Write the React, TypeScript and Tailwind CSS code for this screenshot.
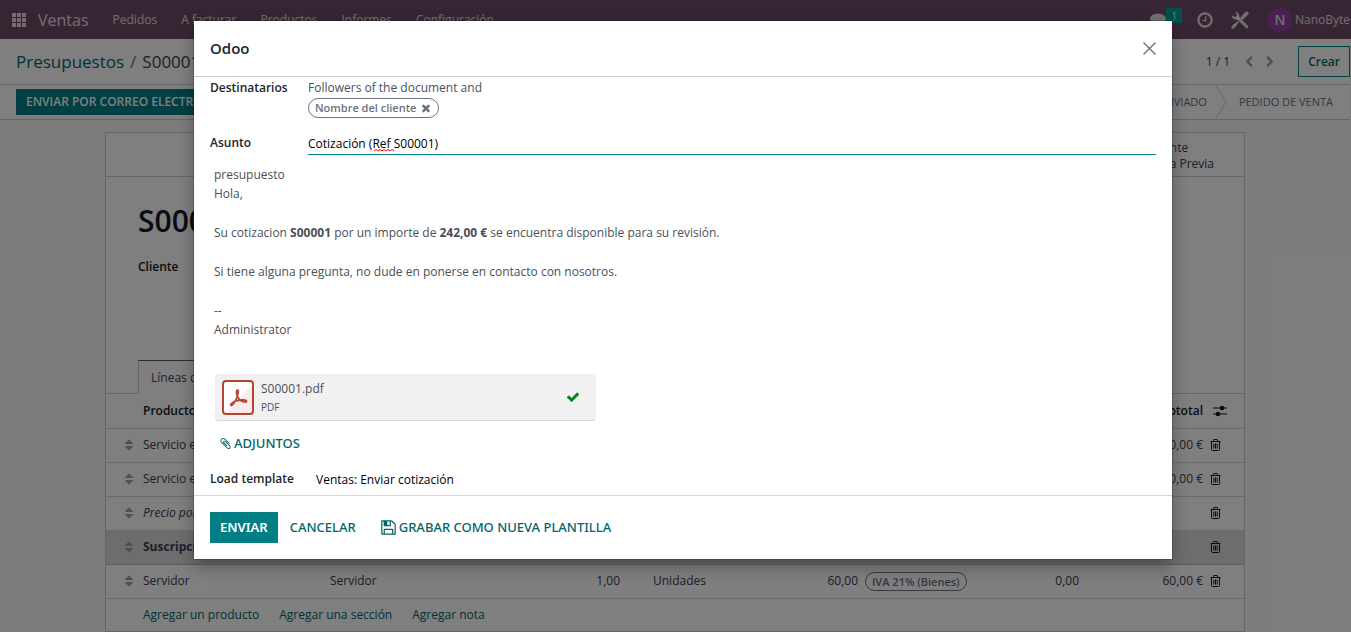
import React, { useState } from 'react';

type IconProps = {
  className?: string;
};

type FaProps = IconProps & {
  d: string;
};

type LineType = 'product' | 'note' | 'section';

type Line = {
  key: number;
  type: LineType;
  product: string;
  description?: string;
  quantity?: string;
  unit?: string;
  price?: string;
  tax?: string;
  discount?: string;
  subtotal?: string;
};

const lines: Line[] = [
  { key: 1, type: 'product', product: 'Servicio estándar', subtotal: '60,00 €' },
  { key: 2, type: 'product', product: 'Servicio extra', subtotal: '80,00 €' },
  { key: 3, type: 'note', product: 'Precio por servicio' },
  { key: 4, type: 'section', product: 'Suscripciones' },
  {
    key: 5,
    type: 'product',
    product: 'Servidor',
    description: 'Servidor',
    quantity: '1,00',
    unit: 'Unidades',
    price: '60,00',
    tax: 'IVA 21% (Bienes)',
    discount: '0,00',
    subtotal: '60,00 €',
  },
];

const menus = ['Pedidos', 'A facturar', 'Productos', 'Informes', 'Configuración'];

const paths = {
  check:
    'M1671 566q0 40-28 68l-724 724-136 136q-28 28-68 28t-68-28l-136-136-362-362q-28-28-28-68t28-68l136-136q28-28 68-28t68 28l294 295 656-657q28-28 68-28t68 28l136 136q28 28 28 68z',
  times:
    'M1490 1322q0 40-28 68l-136 136q-28 28-68 28t-68-28l-294-294-294 294q-28 28-68 28t-68-28l-136-136q-28-28-28-68t28-68l294-294-294-294q-28-28-28-68t28-68l136-136q28-28 68-28t68 28l294 294 294-294q28-28 68-28t68 28l136 136q28 28 28 68t-28 68l-294 294 294 294q28 28 28 68z',
  sort: 'M1408 1088q0 26-19 45l-448 448q-19 19-45 19t-45-19l-448-448q-19-19-19-45t19-45 45-19h896q26 0 45 19t19 45zm0-384q0 26-19 45t-45 19h-896q-26 0-45-19t-19-45 19-45l448-448q19-19 45-19t45 19l448 448q19 19 19 45z',
  clock:
    'M1024 544v448q0 14-9 23t-23 9h-320q-14 0-23-9t-9-23v-64q0-14 9-23t23-9h224v-352q0-14 9-23t23-9h64q14 0 23 9t9 23zm416 352q0-148-73-273t-198-198-273-73-273 73-198 198-73 273 73 273 198 198 273 73 273-73 198-198 73-273zm224 0q0 209-103 385.5t-279.5 279.5-385.5 103-385.5-103-279.5-279.5-103-385.5 103-385.5 279.5-279.5 385.5-103 385.5 103 279.5 279.5 103 385.5z',
  left: 'M1427 301l-531 531 531 531q19 19 19 45t-19 45l-166 166q-19 19-45 19t-45-19l-742-742q-19-19-19-45t19-45l742-742q19-19 45-19t45 19l166 166q19 19 19 45t-19 45z',
  right:
    'M1363 877l-742 742q-19 19-45 19t-45-19l-166-166q-19-19-19-45t19-45l531-531-531-531q-19-19-19-45t19-45l166-166q19-19 45-19t45 19l742 742q19 19 19 45t-19 45z',
  floppy:
    'M512 1536h768v-384h-768v384zm896 0h128v-896q0-14-10-38.5t-20-34.5l-281-281q-10-10-34-20t-39-10v416q0 40-28 68t-68 28h-576q-40 0-68-28t-28-68v-416h-128v1280h128v-416q0-40 28-68t68-28h832q40 0 68 28t28 68v416zm-384-928v-320q0-13-9.5-22.5t-22.5-9.5h-192q-13 0-22.5 9.5t-9.5 22.5v320q0 13 9.5 22.5t22.5 9.5h192q13 0 22.5-9.5t9.5-22.5zm640 32v928q0 40-28 68t-68 28h-1344q-40 0-68-28t-28-68v-1344q0-40 28-68t68-28h928q40 0 88 20t76 48l280 280q28 28 48 76t20 88z',
  paperclip:
    'M1596 1385q0 117-79 196t-196 79q-135 0-235-100l-777-776q-113-115-113-271 0-159 110-270t269-111q158 0 273 113l605 606q10 10 10 22 0 16-30.5 46.5t-46.5 30.5q-13 0-23-10l-606-607q-79-77-181-77-106 0-179 75t-73 181q0 105 76 181l776 777q63 63 145 63 64 0 106-42t42-106q0-82-63-145l-581-581q-26-24-60-24-29 0-48 19t-19 48q0 32 25 59l410 410q10 10 10 22 0 16-31 47t-47 31q-12 0-22-10l-410-410q-63-61-63-149 0-82 57-139t139-57q88 0 149 63l581 581q100 98 100 235z',
};

const Fa: React.FC<FaProps> = ({ d, className }) => (
  <svg viewBox="0 0 1792 1792" fill="currentColor" className={className}>
    <path d={d} />
  </svg>
);

const AppsIcon: React.FC<IconProps> = ({ className }) => (
  <svg viewBox="0 0 14 14" fill="currentColor" className={className}>
    {[0, 5, 10].map((y) =>
      [0, 5, 10].map((x) => (
        <rect key={`${x}-${y}`} x={x} y={y} width="4" height="4" />
      ))
    )}
  </svg>
);

const ToolsIcon: React.FC<IconProps> = ({ className }) => (
  <svg viewBox="0 0 18 18" fill="none" stroke="currentColor" className={className}>
    <path d="M7 7l8.8 8.8" strokeWidth="3" strokeLinecap="round" />
    <path
      d="M4.6 0.9C6.8 1 8.4 2.8 8 5.2L8.6 7.6 7 9 5 8.1C2.6 8.4 0.8 6.8 0.8 4.6L3.1 6.1 5.4 5.6 6 3.2z"
      fill="currentColor"
      strokeWidth="0.4"
    />
    <path d="M11.4 6.7l4.4-4.4" strokeWidth="3.6" strokeLinecap="round" />
    <path d="M7.4 10.6l-4.2 4.2" strokeWidth="2" />
    <path d="M4 14l-2.2 2.4" strokeWidth="3" strokeLinecap="round" />
  </svg>
);

const TrashIcon: React.FC<IconProps> = ({ className }) => (
  <svg viewBox="0 0 11 12" fill="none" stroke="currentColor" className={className}>
    <path d="M0.5 2.5h10M3.5 2.5v-1.4q0-.6.6-.6h2.8q.6 0 .6.6v1.4" />
    <path d="M1.5 2.5v8q0 1 1 1h6q1 0 1-1v-8M3.8 4.5v5M5.5 4.5v5M7.2 4.5v5" />
  </svg>
);

const SlidersIcon: React.FC<IconProps> = ({ className }) => (
  <svg viewBox="0 0 14 12" fill="currentColor" className={className}>
    <path d="M0 2.5h14v1H0zM0 8.5h14v1H0z" />
    <circle cx="9" cy="3" r="2.3" />
    <circle cx="5" cy="9" r="2.3" />
  </svg>
);

const PdfIcon: React.FC<IconProps> = ({ className }) => (
  <svg viewBox="0 0 32 35" className={className}>
    <rect x="1" y="1" width="30" height="33" rx="3" fill="#fff" />
    <path d="M31 4v27q0 3-3 3H4z" fill="#f6eaea" />
    <rect
      x="1"
      y="1"
      width="30"
      height="33"
      rx="3"
      fill="none"
      stroke="#b54434"
      strokeWidth="2"
    />
    <path
      d="M15.6 10.2c-1.5 0-1.3 2.4-.7 4.2.9 2.9 3.4 6.2 6.3 7.3 1.8.7 3.3.5 3.4-.4.1-1.2-2.5-1.6-5-1.4-3.5.2-7.7 1.6-9.7 3.2-1.4 1.1-1.6 2.2-.8 2.4 1.5.4 4.2-4.2 5.7-7.8 1.2-3 2.3-7.5.8-7.5z"
      fill="none"
      stroke="#b54434"
      strokeWidth="1.7"
    />
  </svg>
);

const Navbar: React.FC = () => {
  return (
    <header className="flex h-[39px] shrink-0 items-center bg-[#714b67] text-white/80">
      <button aria-label="Aplicaciones" className="ml-3">
        <AppsIcon className="size-3.5" />
      </button>
      <a href="#ventas" className="ml-3 text-[16px]">
        Ventas
      </a>
      <nav className="ml-6 flex gap-6">
        {menus.map((menu) => (
          <a key={menu} href="#menu">
            {menu}
          </a>
        ))}
      </nav>
      <div className="ml-auto flex items-center">
        <button className="relative mr-[30px] flex" aria-label="Conversaciones">
          <svg viewBox="0 0 16 14" fill="currentColor" className="h-3.5 w-4">
            <ellipse cx="8" cy="6" rx="8" ry="5.5" />
            <path d="M3 9q0 3-2 4.5 3.5 0 6-2.5z" />
          </svg>
          <span className="absolute -top-[5px] left-4 bg-[#00a09d] px-[5px] text-[11px] leading-[15px]">
            1
          </span>
        </button>
        <button aria-label="Actividades" className="mr-[17px]">
          <Fa d={paths.clock} className="size-[18px]" />
        </button>
        <button aria-label="Herramientas" className="mr-[19px]">
          <ToolsIcon className="size-[18px]" />
        </button>
        <button className="flex w-[83px] items-center gap-[3px]">
          <span className="flex size-6 shrink-0 items-center justify-center rounded-full bg-[#9040a4] text-[14px] font-semibold">
            N
          </span>
          NanoByte
        </button>
      </div>
    </header>
  );
};

const ControlPanel: React.FC = () => {
  return (
    <div className="flex h-[46px] shrink-0 items-center border-b border-[#c9ccd2] bg-white pl-4">
      <ol className="flex gap-1.5 text-[17px]">
        <li>
          <a href="#presupuestos" className="text-[#01666b]">
            Presupuestos
          </a>
        </li>
        <li className="text-gray-500">/</li>
        <li>S00001</li>
      </ol>
      <div className="ml-auto flex items-center">
        <span className="mr-[13px]">1 / 1</span>
        <button aria-label="Anterior" className="mr-[9px] text-gray-400">
          <Fa d={paths.left} className="size-3" />
        </button>
        <button aria-label="Siguiente" className="mr-[22px] text-gray-400">
          <Fa d={paths.right} className="size-3" />
        </button>
        <button className="h-[31px] border border-[#017e84] px-[9px] font-semibold text-[#01666b]">
          Crear
        </button>
      </div>
    </div>
  );
};

const StatusBar: React.FC = () => {
  return (
    <div className="flex h-[35px] shrink-0 items-center border-b border-[#c9ccd2] bg-white pl-4">
      <button className="h-[26px] bg-[#017e84] px-2.5 font-semibold text-white">
        ENVIAR POR CORREO ELECTRÓNICO
      </button>
      <div className="ml-auto flex h-full items-center text-[11px] text-gray-500">
        <span>PRESUPUESTO ENVIADO</span>
        <svg
          viewBox="0 0 12 34"
          fill="none"
          stroke="#c9ccd2"
          className="mr-3 ml-2 h-full w-3"
        >
          <path d="M1 1l10 16-10 16" />
        </svg>
        <span className="pr-[17px]">PEDIDO DE VENTA</span>
      </div>
    </div>
  );
};

const OrderLine: React.FC<{ line: Line }> = ({ line }) => {
  const remove = (
    <td className="pl-0.5">
      <button aria-label="Eliminar" className="flex text-gray-900">
        <TrashIcon className="h-3 w-[11px]" />
      </button>
    </td>
  );
  const handle = (
    <td>
      <Fa d={paths.sort} className="ml-4 size-3.5 text-gray-400" />
    </td>
  );

  if (line.type !== 'product') {
    return (
      <tr
        className={
          line.type === 'section'
            ? 'h-[34px] border-b border-[#b8bbc0] bg-[#dadada] font-bold'
            : 'h-[34px] border-b border-[#d4d6d9] italic'
        }
      >
        {handle}
        <td colSpan={8} className="px-[5px]">
          {line.product}
        </td>
        {remove}
      </tr>
    );
  }

  return (
    <tr className="h-[34px] border-b border-[#d4d6d9]">
      {handle}
      <td className="px-[5px]">{line.product}</td>
      <td className="px-[5px]">{line.description}</td>
      <td className="pr-7 text-right">{line.quantity}</td>
      <td className="px-[5px]">{line.unit}</td>
      <td className="px-[5px] text-right">{line.price}</td>
      <td className="px-0.5">
        {line.tax && (
          <span className="inline-block rounded-full border border-gray-500 px-1.5 text-[11px] leading-[17px] font-semibold text-gray-500">
            {line.tax}
          </span>
        )}
      </td>
      <td className="px-[5px] text-right">{line.discount}</td>
      <td className="px-[5px] text-right">{line.subtotal}</td>
      {remove}
    </tr>
  );
};

const OrderSheet: React.FC = () => {
  return (
    <main className="mx-auto mt-3 w-full max-w-[1140px] border border-[#c9ccd2] bg-white">
      <div className="flex h-11 items-center justify-end border-b border-[#c9ccd2] pt-0.5 pr-[30px]">
        <a href="#previa" className="leading-4">
          Cliente
          <br />
          Vista Previa
        </a>
      </div>
      <div className="px-8 pt-6 pb-[83px] text-gray-900">
        <h1 className="text-[30px] leading-10 font-semibold">S00001</h1>
        <p className="mt-4 leading-5 font-semibold">Cliente</p>
      </div>
      <div className="flex h-[34px]">
        <span className="w-8 border-b border-[#c9ccd2]" />
        <button className="border-x border-t border-x-[#c9ccd2] border-t-[#714b67] px-3">
          Líneas del pedido
        </button>
        <span className="flex-1 border-b border-[#c9ccd2]" />
      </div>
      <table className="w-full table-fixed border-collapse whitespace-nowrap">
        <colgroup>
          <col className="w-8" />
          <col className="w-[187px]" />
          <col />
          <col className="w-[118px]" />
          <col className="w-[105px]" />
          <col className="w-[110px]" />
          <col className="w-[112px]" />
          <col className="w-[109px]" />
          <col className="w-[124px]" />
          <col className="w-9" />
        </colgroup>
        <thead>
          <tr className="h-[34px] border-b border-[#d4d6d9] text-left text-gray-900">
            <th />
            <th className="px-[5px] font-semibold">Producto</th>
            <th className="px-[5px] font-semibold">Descripción</th>
            <th className="pr-7 text-right font-semibold">Cantidad</th>
            <th className="px-[5px] font-semibold">UdM</th>
            <th className="px-[5px] text-right font-semibold">Precio</th>
            <th className="px-0.5 font-semibold">Impuestos</th>
            <th className="px-[5px] text-right font-semibold">% Desc.</th>
            <th className="px-[5px] text-right font-semibold">Subtotal</th>
            <th className="pl-[5px]">
              <SlidersIcon className="h-3 w-3.5" />
            </th>
          </tr>
        </thead>
        <tbody>
          {lines.map((line) => (
            <OrderLine key={line.key} line={line} />
          ))}
        </tbody>
      </table>
      <div className="flex h-8 items-center gap-5 pl-[37px] text-[#01666b]">
        <button>Agregar un producto</button>
        <button>Agregar una sección</button>
        <button>Agregar nota</button>
      </div>
    </main>
  );
};

const MailDialog: React.FC = () => {
  const [subject, setSubject] = useState('Cotización (Ref S00001)');
  const [template, setTemplate] = useState('Ventas: Enviar cotización');

  return (
    <div className="absolute inset-0 flex items-start justify-center bg-black/50 pt-[21px] pl-[15px]">
      <section
        role="dialog"
        aria-label="Odoo"
        className="w-full max-w-[978px] bg-white text-[#495057] shadow-[0_0_1px_#000,0_8px_16px_rgba(0,0,0,0.3)]"
      >
        <header className="flex h-14 items-center justify-between border-b border-[#c9ccd2] px-4">
          <h2 className="text-[15px] font-semibold text-[#212529]">Odoo</h2>
          <button aria-label="Cerrar" className="text-gray-500">
            <svg
              viewBox="0 0 13 13"
              fill="none"
              stroke="currentColor"
              strokeWidth="1.4"
              className="size-[13px]"
            >
              <path d="M0.5 0.5l12 12M12.5 0.5l-12 12" />
            </svg>
          </button>
        </header>

        <div className="px-4">
          <div className="flex">
            <span className="w-[98px] leading-[21px] font-semibold text-[#212529]">
              Destinatarios
            </span>
            <div>
              <p className="leading-[21px]">Followers of the document and</p>
              <span className="inline-flex h-5 items-center gap-1 rounded-full border border-gray-500 px-1.5 text-[11px] font-semibold text-gray-500">
                Nombre del cliente
                <button aria-label="Quitar">
                  <Fa d={paths.times} className="size-3" />
                </button>
              </span>
            </div>
          </div>

          <div className="mt-3 flex items-center">
            <label
              htmlFor="subject"
              className="w-[98px] font-semibold text-[#212529]"
            >
              Asunto
            </label>
            <div className="relative flex-1">
              <input
                id="subject"
                value={subject}
                spellCheck={false}
                onChange={(e) => setSubject(e.target.value)}
                className="block h-[25px] w-full border-b border-b-[#017e84] pt-0.5 text-black outline-none"
              />
              <svg
                viewBox="0 0 20 3"
                fill="none"
                stroke="#f00"
                className="absolute bottom-[3px] left-[66px] h-[3px] w-5"
              >
                <path d="M0 2l2-1.5 2 1.5 2-1.5 2 1.5 2-1.5 2 1.5 2-1.5 2 1.5 2-1.5 2 1.5" />
              </svg>
            </div>
          </div>

          <div className="flex flex-col gap-5 px-1 pt-2.5 leading-[19px]">
            <p>
              presupuesto
              <br />
              Hola,
            </p>
            <p>
              Su cotizacion <b>S00001</b> por un importe de <b>242,00 €</b> se
              encuentra disponible para su revisión.
            </p>
            <p>
              Si tiene alguna pregunta, no dude en ponerse en contacto con
              nosotros.
            </p>
            <p>
              --
              <br />
              Administrator
            </p>
          </div>

          <div className="mt-[35px] ml-[5px] flex h-[47px] w-[381px] items-center rounded-sm border-b border-gray-300 bg-[#f1f1f1] pr-4 pl-[7px]">
            <PdfIcon className="h-[35px] w-8" />
            <div className="ml-[7px] pt-0.5 leading-[18px]">
              <p>S00001.pdf</p>
              <p className="text-[10px]">PDF</p>
            </div>
            <Fa d={paths.check} className="ml-auto size-3.5 text-[#008a1c]" />
          </div>

          <button className="mt-3 ml-[9px] flex items-center gap-0.5 font-['Noto_Sans','Open_Sans',sans-serif] text-[13px] leading-5 font-medium text-[#01666b]">
            <Fa d={paths.paperclip} className="size-[13px]" />
            ADJUNTOS
          </button>

          <div className="mt-4 flex items-center pb-1.5">
            <label
              htmlFor="template"
              className="w-[106px] font-semibold text-[#212529]"
            >
              Load template
            </label>
            <input
              id="template"
              value={template}
              onChange={(e) => setTemplate(e.target.value)}
              className="h-5 flex-1 text-black outline-none"
            />
          </div>
        </div>

        <footer className="flex items-center border-t border-gray-300 p-4 font-['Noto_Sans','Open_Sans',sans-serif] text-[13px] font-medium text-[#01666b]">
          <button className="h-[31px] bg-[#017e84] px-2.5 font-semibold text-white">
            ENVIAR
          </button>
          <button className="ml-0.5 h-[31px] px-2.5">CANCELAR</button>
          <button className="ml-1 flex h-[31px] items-center gap-0.5 px-2.5">
            <Fa d={paths.floppy} className="size-[17px]" />
            GRABAR COMO NUEVA PLANTILLA
          </button>
        </footer>
      </section>
    </div>
  );
};

const App: React.FC = () => {
  return (
    <div className="relative flex h-screen flex-col overflow-hidden bg-[#f8f9fa] font-['Open_Sans','Noto_Sans',sans-serif] text-[12px] text-gray-700">
      <Navbar />
      <div className="flex flex-1 flex-col pr-px">
        <ControlPanel />
        <StatusBar />
        <OrderSheet />
      </div>
      <MailDialog />
    </div>
  );
};

export default App;
